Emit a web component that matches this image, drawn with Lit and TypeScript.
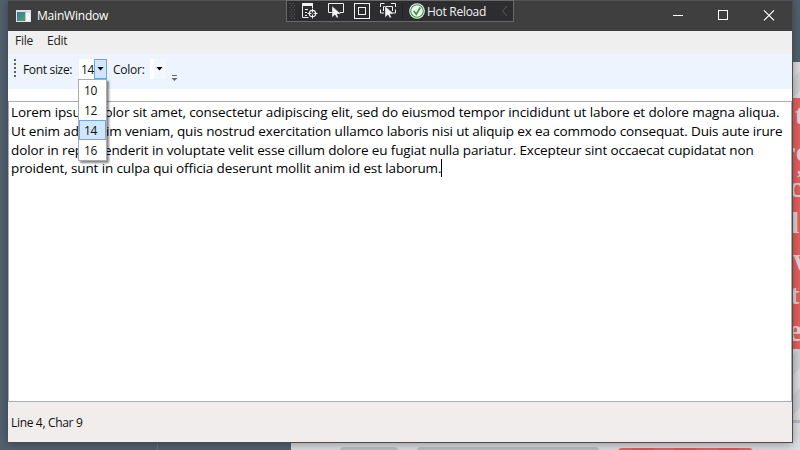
import { LitElement, html, svg, css } from "lit";
import { customElement } from "lit/decorators.js";

const LINES = [
  "Lorem ipsum dolor sit amet, consectetur adipiscing elit, sed do eiusmod tempor incididunt ut labore et dolore magna aliqua.",
  "Ut enim ad minim veniam, quis nostrud exercitation ullamco laboris nisi ut aliquip ex ea commodo consequat. Duis aute irure",
  "dolor in reprehenderit in voluptate velit esse cillum dolore eu fugiat nulla pariatur. Excepteur sint occaecat cupidatat non",
  "proident, sunt in culpa qui officia deserunt mollit anim id est laborum.",
];
const SIZES = [10, 12, 14, 16];

@customElement("desktop-backdrop")
class DesktopBackdrop extends LitElement {
  static styles = css`
    :host { display: block; position: absolute; inset: 0; }
    svg { display: block; }
    .poster { font-family: "Liberation Serif", serif; font-weight: bold; fill: #e6d6d8; }
  `;
  render() {
    const letters: [string, number, number, number][] = [
      ["t", 795, 124, 28], ["r", 783, 161, 28], ["e", 796, 161, 28], [",", 797, 174, 22],
      ["c", 789, 197, 30], ["l", 791, 233, 30], ["w", 793, 270, 32], ["t", 790, 304, 28], ["e", 788, 341, 32],
    ];
    return html`<svg width="800" height="450" viewBox="0 0 800 450">
      <defs>
        <pattern id="stripe" width="28" height="28" patternUnits="userSpaceOnUse" patternTransform="rotate(45)">
          <rect width="28" height="28" fill="#dedee0"></rect><rect width="14" height="28" fill="#d1d2d5"></rect>
        </pattern>
        <pattern id="redstripe" width="30" height="28" patternUnits="userSpaceOnUse" patternTransform="rotate(45)">
          <rect width="30" height="28" fill="#dd5a59"></rect><rect width="15" height="28" fill="#df6768"></rect>
        </pattern>
      </defs>
      <rect width="800" height="450" fill="#536170"></rect>
      <rect x="157" y="440" width="1" height="10" fill="#657382"></rect>
      <rect x="291" y="440" width="509" height="10" fill="#dcdde0"></rect>
      <rect x="340" y="447" width="58" height="8" rx="4" fill="#b8bfc6"></rect>
      <rect x="417" y="447" width="182" height="8" rx="4" fill="#b8bfc6"></rect>
      <rect x="618" y="448" width="135" height="8" rx="4" fill="url(#redstripe)"></rect>
      <rect x="790" y="62" width="10" height="358" fill="url(#stripe)"></rect>
      <rect x="790" y="98" width="10" height="251" fill="#e8605e"></rect>
      <rect x="790" y="420" width="10" height="3" fill="#b7c0ca"></rect>
      <rect x="790" y="423" width="10" height="27" fill="#dfe0e4"></rect>
      ${letters.map(([c, x, y, s]) => svg`<text class="poster" x=${x} y=${y} font-size=${s}>${c}</text>`)}
    </svg>`;
  }
}

@customElement("debug-toolbar")
class DebugToolbar extends LitElement {
  static styles = css`
    :host {
      position: absolute; left: 278px; top: 0; width: 228px; height: 22px; box-sizing: border-box;
      border: 1px solid #686868; background: #2d2d30; display: flex; align-items: center;
    }
    svg { display: block; flex: none; }
    .label { width: 74px; margin-left: 2px; color: #f1f1f1; font-size: 12px; line-height: 20px; letter-spacing: -.28px; white-space: nowrap; padding-top: 1px; }
  `;
  render() {
    const cursor = svg`<path d="M0 0V11.500L3 8.800L4.800 12L6.400 11.200L5 8H9Z" fill="#f5f5f5" stroke="#2d2d30" stroke-width=".4"></path>`;
    return html`
      <svg width="138" height="20" viewBox="287 1 138 20" fill="none" stroke="#f1f1f1">
        ${[0, 1, 2, 3, 4, 5, 6, 7].map((r) => svg`<path d="M${289.5 + (r % 2 ? 1.5 : 0)} ${3.5 + r * 2.1}h4.5" stroke="#66666a" stroke-dasharray="1 2"></path>`)}
        <path d="M302 4.500h11" stroke-width="3"></path>
        <path d="M302.500 4v13.500h6M312.500 6v2M305 9.500h3M305 12.500h2M305 15.500h2"></path>
        <circle cx="312.500" cy="13.500" r="3.200" stroke-width="1.200"></circle>
        <path d="M312.500 8.500v4M312.500 14.500v4M307.500 13.500h4M313.500 13.500h4"></path>
        <path d="M332 12.500h-3.500v-9h15v9h-4"></path>
        <g transform="translate(332 6)">${cursor}</g>
        <rect x="354.500" y="3.500" width="15" height="15"></rect>
        <rect x="358.500" y="7.500" width="7" height="7"></rect>
        <path d="M380.500 7V3.500h4M391 3.500h4.500V7M380.500 9.500v3.500h3.500M395.500 9.500v3.500h-4M383.500 11V6.500h9V11"></path>
        <g transform="translate(385 6)">${cursor}</g>
        <path d="M402.500 4v14" stroke="#222225"></path>
        <circle cx="417" cy="11" r="7.800" fill="#f5f5f5" stroke="none"></circle>
        <circle cx="417" cy="11" r="6.300" stroke="#389645" stroke-width="1.100"></circle>
        <path d="M413.700 11l2.600 3.300L420.300 7.500" stroke="#2f983d" stroke-width="1.700"></path>
      </svg>
      <div class="label">Hot Reload</div>
      <svg width="7" height="12" viewBox="0 0 7 12"><path d="M6 1L1.500 6L6 11" fill="none" stroke="#5c5c60"></path></svg>
    `;
  }
}

@customElement("size-menu")
class SizeMenu extends LitElement {
  static styles = css`
    :host {
      display: block; position: absolute; z-index: 3; left: 0; top: 20px; width: 29px; height: 82px; box-sizing: border-box;
      border: 1px solid #a8abb2; background: #fff; box-shadow: 2px 2px 2px rgba(0,0,0,.48);
    }
    .item { height: 20px; box-sizing: border-box; padding-left: 4px; line-height: 19px; border: 1px solid transparent; letter-spacing: -.35px; }
    .item.on { background: #d0e6fd; border-color: #70a9e0; }
  `;
  render() {
    return SIZES.map((s) => html`<div class="item ${s === 14 ? "on" : ""}">${s}</div>`);
  }
}

@customElement("app-root")
class AppRoot extends LitElement {
  static styles = css`
    :host {
      display: block; position: relative; width: 800px; height: 450px; overflow: hidden;
      font: 12px/16px "Open Sans", sans-serif; color: #111;
    }
    .window {
      position: relative; box-sizing: border-box; width: 785px; height: 443px; margin-left: 8px; display: flex; flex-direction: column;
      border: solid #4c4c4c; border-width: 0 1px 1px 0; background: #fff; box-shadow: 0 1px 10px rgba(0,0,0,.36);
    }
    .title { height: 31px; box-sizing: border-box; border-top: 1px solid #515151; background: #3f3f3f; color: #fff; display: flex; align-items: center; padding-left: 8px; }
    .title svg { display: block; }
    .name { margin-left: 6px; flex: 1; letter-spacing: -.2px; }
    .menu { height: 23px; background: #efefef; display: flex; padding-left: 7px; gap: 14px; line-height: 20px; color: #222; letter-spacing: -.25px; }
    .tools { height: 35px; background: #edf4fd; display: flex; align-items: flex-start; padding: 5px 0 0 5px; box-sizing: border-box; line-height: 21px; }
    .tools > * { flex: none; }
    .grip { width: 10px; height: 20px; }
    .fs { width: 55px; letter-spacing: -.33px; }
    .combo { position: relative; width: 29px; height: 20px; display: flex; }
    .value { width: 15px; margin-left: 1px; background: #fff; padding-left: 2px; box-sizing: border-box; letter-spacing: -.4px; }
    .drop { box-sizing: border-box; width: 13px; height: 20px; border: 1px solid #68a6df; background: #cfe6fc; }
    .drop svg, .plain svg { display: block; }
    .color { margin-left: 6px; width: 37px; letter-spacing: -.25px; }
    .plain { width: 16px; height: 20px; background: #fff; padding-left: 4px; box-sizing: border-box; }
    .plain svg { background: #f3f8fe; }
    .more { margin: 15px 0 0 5px; }
    .editor {
      box-sizing: border-box; height: 301px; margin-top: 12px; border: 1px solid #abadb3; padding: 1px 0 0 2px;
      font-size: 13.5px; line-height: 19px; color: #000; white-space: nowrap;
    }
    .row { display: flex; height: 19px; }
    .row:last-child { margin-top: -1px; }
    .l0 { letter-spacing: -.105px; } .l1 { letter-spacing: -.135px; } .l2 { letter-spacing: -.127px; } .l3 { letter-spacing: -.125px; }
    .caret { width: 1px; height: 18px; background: #000; }
    .status { flex: 1; background: #f0edec; padding: 13px 0 0 3px; letter-spacing: -.33px; }
  `;
  render() {
    return html`
      <desktop-backdrop></desktop-backdrop>
      <div class="window">
        <div class="title">
          <svg width="15" height="12" viewBox="0 0 15 12">
            <defs><linearGradient id="app" x2="1" y2="1"><stop stop-color="#3d75a6"></stop><stop offset="1" stop-color="#4ba66b"></stop></linearGradient></defs>
            <rect width="15" height="12" fill="#dce3e5"></rect><rect x="1" y="2" width="8" height="9" fill="url(#app)"></rect>
            <rect x="10" y="3" width="4" height="8" fill="#f7f7f7"></rect><path d="M9.500 1v10" stroke="#bcc6ca"></path>
          </svg>
          <div class="name">MainWindow</div>
          <svg width="120" height="30" viewBox="672 1 120 30" fill="none" stroke="#fff">
            <path d="M673 15.500h10"></path><rect x="718.500" y="10.500" width="9" height="9"></rect><path d="M764 10.300l10 10M774 10.300l-10 10" stroke-width="1.200"></path>
          </svg>
        </div>
        <debug-toolbar></debug-toolbar>
        <div class="menu"><span>File</span><span>Edit</span></div>
        <div class="tools">
          <svg class="grip" viewBox="0 0 10 20"><path d="M2 0v19" stroke="#606060" stroke-width="2" stroke-dasharray="2 2"></path></svg>
          <div class="fs">Font size:</div>
          <div class="combo">
            <div class="value">14</div>
            <div class="drop"><svg width="11" height="18"><path d="M2.500 7h6L5.500 10.500z" fill="#000"></path></svg></div>
            <size-menu></size-menu>
          </div>
          <div class="color">Color:</div>
          <div class="plain"><svg width="12" height="20"><path d="M2.500 8h6L5.500 11.500z" fill="#000"></path></svg></div>
          <svg class="more" width="7" height="9" viewBox="0 0 7 9"><path d="M1 1.500h5" stroke="#666"></path><path d="M.5 4h6L3.500 7z" fill="#666"></path></svg>
        </div>
        <div class="editor">
          ${LINES.map((t, i) => html`<div class="row"><span class="l${i}">${t}</span>${i === 3 ? html`<span class="caret"></span>` : ""}</div>`)}
        </div>
        <div class="status">Line 4, Char 9</div>
      </div>
    `;
  }
}
